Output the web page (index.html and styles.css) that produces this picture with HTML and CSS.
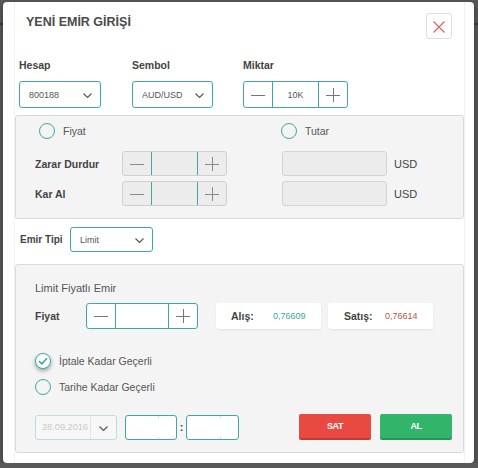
FILE: index.html
```html
<!DOCTYPE html>
<html lang="tr">
<head>
<meta charset="utf-8">
<title>Yeni Emir Girişi</title>
<link rel="stylesheet" href="styles.css">
</head>
<body>
<div class="modal">
  <div class="inner">
    <div class="header">
      <h1 class="title">YENİ EMİR GİRİŞİ</h1>
      <button class="close" type="button" aria-label="Kapat">
        <svg width="12" height="12" viewBox="0 0 12 12"><path d="M0.5 0.5L11.5 11.5M11.5 0.5L0.5 11.5" stroke="#e05a5a" stroke-width="1.1" fill="none"/></svg>
      </button>
    </div>

    <div class="fields">
      <div class="field f-hesap">
        <div class="lbl">Hesap</div>
        <div class="select sel-hesap"><span>800188</span>
          <svg class="chev" width="9" height="5" viewBox="0 0 9 5"><path d="M0.5 0.5L4.5 4.5L8.5 0.5" stroke="#555" stroke-width="1.1" fill="none"/></svg>
        </div>
      </div>
      <div class="field f-sembol">
        <div class="lbl">Sembol</div>
        <div class="select sel-sembol"><span>AUD/USD</span>
          <svg class="chev" width="9" height="5" viewBox="0 0 9 5"><path d="M0.5 0.5L4.5 4.5L8.5 0.5" stroke="#555" stroke-width="1.1" fill="none"/></svg>
        </div>
      </div>
      <div class="field f-miktar">
        <div class="lbl">Miktar</div>
        <div class="stepper st-miktar">
          <span class="sbtn"><svg width="14" height="14" viewBox="0 0 14 14"><path d="M0 7.5H14" stroke="#777" fill="none"/></svg></span>
          <span class="sval">10K</span>
          <span class="sbtn"><svg width="14" height="14" viewBox="0 0 14 14"><path d="M0 7.5H14M7.5 0V14" stroke="#777" fill="none"/></svg></span>
        </div>
      </div>
    </div>

    <div class="panel p1">
      <div class="radios">
        <div class="radio r-fiyat"><span class="circle"></span><span>Fiyat</span></div>
        <div class="radio"><span class="circle"></span><span>Tutar</span></div>
      </div>
      <div class="sl-row">
        <span class="row-lbl">Zarar Durdur</span>
        <div class="stepper disabled">
          <span class="sbtn"><svg width="14" height="14" viewBox="0 0 14 14"><path d="M0 7.5H14" stroke="#8a8a8a" fill="none"/></svg></span>
          <span class="sval"></span>
          <span class="sbtn"><svg width="14" height="14" viewBox="0 0 14 14"><path d="M0 7.5H14M7.5 0V14" stroke="#8a8a8a" fill="none"/></svg></span>
        </div>
        <span></span>
        <div class="amount"></div>
        <span class="cur">USD</span>
      </div>
      <div class="sl-row">
        <span class="row-lbl">Kar Al</span>
        <div class="stepper disabled">
          <span class="sbtn"><svg width="14" height="14" viewBox="0 0 14 14"><path d="M0 7.5H14" stroke="#8a8a8a" fill="none"/></svg></span>
          <span class="sval"></span>
          <span class="sbtn"><svg width="14" height="14" viewBox="0 0 14 14"><path d="M0 7.5H14M7.5 0V14" stroke="#8a8a8a" fill="none"/></svg></span>
        </div>
        <span></span>
        <div class="amount"></div>
        <span class="cur">USD</span>
      </div>
    </div>

    <div class="type-row">
      <span class="type-lbl">Emir Tipi</span>
      <div class="select sel-type"><span>Limit</span>
        <svg class="chev" width="9" height="5" viewBox="0 0 9 5"><path d="M0.5 0.5L4.5 4.5L8.5 0.5" stroke="#555" stroke-width="1.1" fill="none"/></svg>
      </div>
    </div>

    <div class="panel p2">
      <div class="p2-title">Limit Fiyatlı Emir</div>
      <div class="price-row">
        <span class="row-lbl price-lbl">Fiyat</span>
        <div class="stepper st-price">
          <span class="sbtn"><svg width="14" height="14" viewBox="0 0 14 14"><path d="M0 7.5H14" stroke="#777" fill="none"/></svg></span>
          <span class="sval"></span>
          <span class="sbtn"><svg width="14" height="14" viewBox="0 0 14 14"><path d="M0 7.5H14M7.5 0V14" stroke="#777" fill="none"/></svg></span>
        </div>
        <div class="quote q-alis"><span class="q-lbl">Alış:</span><span class="q-val up">0,76609</span></div>
        <div class="quote q-satis"><span class="q-lbl">Satış:</span><span class="q-val down">0,76614</span></div>
      </div>

      <div class="radio r-check">
        <span class="circle checked"><svg width="10" height="8" viewBox="0 0 10 8"><path d="M1 4.2L3.8 6.8L9 1.2" stroke="#3ea9a4" stroke-width="1.6" fill="none"/></svg></span>
        <span>İptale Kadar Geçerli</span>
      </div>
      <div class="radio r-date">
        <span class="circle"></span>
        <span>Tarihe Kadar Geçerli</span>
      </div>

      <div class="date-row">
        <div class="date-sel">
          <span class="date-txt">28.09.2016</span>
          <span class="date-btn"><svg width="9" height="5" viewBox="0 0 9 5"><path d="M0.5 0.5L4.5 4.5L8.5 0.5" stroke="#555" stroke-width="1.1" fill="none"/></svg></span>
        </div>
        <div class="time t1"></div>
        <span class="colon">:</span>
        <div class="time t2"></div>
        <div class="actions">
          <button class="btn sat" type="button">SAT</button>
          <button class="btn al" type="button">AL</button>
        </div>
      </div>
    </div>
  </div>
</div>
</body>
</html>
```

FILE: styles.css
```css
* { box-sizing: border-box; }

body {
  margin: 0;
  background: #595959 linear-gradient(to bottom, transparent 23px, #3a3a3a 23px, #3a3a3a 25px, transparent 25px);
  font-family: "Liberation Sans", Arial, sans-serif;
  color: #444;
}

.modal {
  margin: 2px 0 0 3px;
  width: 471px;
  height: 461px;
  background: #fff;
  border-radius: 4px;
  box-shadow: 0 2px 6px rgba(0, 0, 0, 0.4);
  overflow: hidden;
}

.inner {
  margin-left: 11px;
  width: 451px;
  height: 100%;
  border-left: 1px solid #f2f2f2;
  border-right: 1px solid #f2f2f2;
}

/* header */
.header {
  display: flex;
  justify-content: space-between;
  align-items: flex-start;
  padding: 11px 12px 0 11px;
}
.title {
  margin: 2px 0 0;
  font-size: 12.5px;
  line-height: 15px;
  font-weight: bold;
  color: #4a4a4a;
}
.close {
  width: 26px;
  height: 26px;
  border: 1px solid #dedede;
  border-radius: 3px;
  background: #fff;
  padding: 0;
  display: flex;
  align-items: center;
  justify-content: center;
  margin-left: -1px;
}
.close svg { margin: 2px 1px 0 0; }

/* top fields */
.fields {
  display: flex;
  padding-left: 4px;
  margin-top: 20px;
}
.f-hesap { width: 113px; }
.f-sembol { width: 111px; }
.lbl {
  font-size: 10.5px;
  font-weight: bold;
  line-height: 13px;
  margin-bottom: 9px;
  color: #444;
}
.select {
  height: 27px;
  border: 1px solid #3ea9a4;
  border-radius: 3px;
  background: #fff;
  display: flex;
  align-items: center;
  justify-content: space-between;
  padding: 0 8px 0 9px;
  font-size: 9px;
  color: #555;
}
.sel-hesap { width: 82px; }
.sel-sembol { width: 81px; }
.chev { margin-top: 2px; }

.stepper {
  display: flex;
  height: 27px;
  border: 1px solid #3ea9a4;
  border-radius: 3px;
  background: #fff;
}
.st-miktar { width: 105px; }
.sbtn {
  width: 28px;
  display: flex;
  align-items: center;
  justify-content: center;
}
.sval {
  width: 47px;
  border-left: 1px solid #3ea9a4;
  border-right: 1px solid #3ea9a4;
  display: flex;
  align-items: center;
  justify-content: center;
  font-size: 9px;
  color: #555;
}

/* panels */
.panel {
  width: 449px;
  background: #f4f4f4;
  border: 1px solid #dadada;
  border-radius: 3px;
}
.p1 {
  margin-top: 7px;
  height: 104px;
  padding-top: 7px;
}
.radios {
  display: flex;
  padding-left: 23px;
}
.radio {
  display: flex;
  align-items: center;
  gap: 8px;
  font-size: 10.5px;
  color: #555;
  height: 16px;
}
.r-fiyat { width: 242px; }
.circle {
  width: 16px;
  height: 16px;
  border: 1.5px solid #3ea9a4;
  border-radius: 50%;
  flex: none;
  display: flex;
  align-items: center;
  justify-content: center;
}
.circle.checked {
  background: #fff;
  box-shadow: 0 2px 4px rgba(0, 0, 0, 0.35);
}

.sl-row {
  display: grid;
  grid-template-columns: 87px 105px 55px 105px auto;
  align-items: center;
  height: 25px;
  padding-left: 19px;
  margin-top: 5px;
}
.radios + .sl-row { margin-top: 12px; }
.row-lbl {
  font-size: 10.5px;
  font-weight: bold;
  color: #444;
}
.stepper.disabled {
  height: 25px;
  width: 105px;
  background: #ececec;
  border-color: #d0d0d0;
}
.stepper.disabled .sval {
  width: 47px;
}
.amount {
  height: 25px;
  background: #ececec;
  border: 1px solid #d3d3d3;
  border-radius: 3px;
}
.cur {
  padding-left: 7px;
  font-size: 11px;
  color: #444;
}

/* order type */
.type-row {
  display: flex;
  align-items: center;
  margin-top: 8px;
  padding-left: 5px;
}
.type-lbl {
  width: 50px;
  font-size: 10px;
  font-weight: bold;
  color: #444;
}
.sel-type {
  width: 83px;
  height: 25px;
}

/* limit panel */
.p2 {
  margin-top: 12px;
  height: 189px;
  padding: 16px 11px 0 19px;
}
.p2-title {
  font-size: 11px;
  line-height: 14px;
  color: #555;
}
.price-row {
  display: flex;
  align-items: center;
  margin-top: 8px;
  height: 26px;
}
.price-lbl { width: 51px; }
.st-price {
  width: 112px;
  height: 26px;
}
.st-price .sval { width: 54px; }
.quote {
  width: 105px;
  height: 26px;
  background: #fff;
  border-radius: 3px;
  box-shadow: 0 1px 2px rgba(0, 0, 0, 0.08);
  display: flex;
  align-items: center;
  padding-left: 15px;
}
.q-alis { margin-left: 18px; }
.q-satis { margin-left: 7px; padding-left: 16px; }
.q-lbl {
  width: 42px;
  font-size: 10.5px;
  font-weight: bold;
  color: #444;
}
.q-satis .q-lbl { width: 41px; }
.q-val { font-size: 9px; }
.q-val.up { color: #3aa59b; }
.q-val.down { color: #c0504d; }

.r-check { margin-top: 24px; }
.r-date { margin-top: 10px; }

.date-row {
  display: flex;
  align-items: center;
  margin-top: 19px;
  height: 26px;
}
.date-sel {
  display: flex;
  width: 82px;
  height: 25px;
  border: 1px solid #bcdedb;
  border-radius: 3px;
  background: #f7f7f7;
}
.date-txt {
  width: 55px;
  border-right: 1px solid #e6e6e6;
  display: flex;
  align-items: center;
  padding-left: 6px;
  font-size: 9.2px;
  color: #c9c9c9;
}
.date-btn {
  flex: 1;
  display: flex;
  align-items: center;
  justify-content: center;
  padding-top: 2px;
}
.time {
  height: 25px;
  border: 1px solid #3ea9a4;
  border-radius: 3px;
  background-color: #fff;
  background-image: linear-gradient(#dcdcdc, #dcdcdc), linear-gradient(#dcdcdc, #dcdcdc);
  background-repeat: no-repeat;
  background-size: 1px 2px, 1px 2px;
}
.t1 {
  width: 52px;
  margin-left: 8px;
  background-position: 32px 0, 32px 100%;
}
.t2 {
  width: 53px;
  background-position: 33px 0, 33px 100%;
}
.colon {
  width: 9px;
  text-align: center;
  font-size: 11px;
  font-weight: bold;
  color: #444;
}
.actions {
  margin-left: auto;
  display: flex;
  gap: 9px;
}
.btn {
  width: 72px;
  height: 26px;
  border: none;
  border-radius: 2px;
  color: #fff;
  font-family: "Liberation Sans", Arial, sans-serif;
  font-size: 9px;
  font-weight: bold;
  letter-spacing: -0.5px;
  padding: 0;
}
.btn.sat {
  background: #e84a41;
  border-bottom: 2px solid #c23c35;
}
.btn.al {
  background: #33b46b;
  border-bottom: 2px solid #27925a;
}
```
